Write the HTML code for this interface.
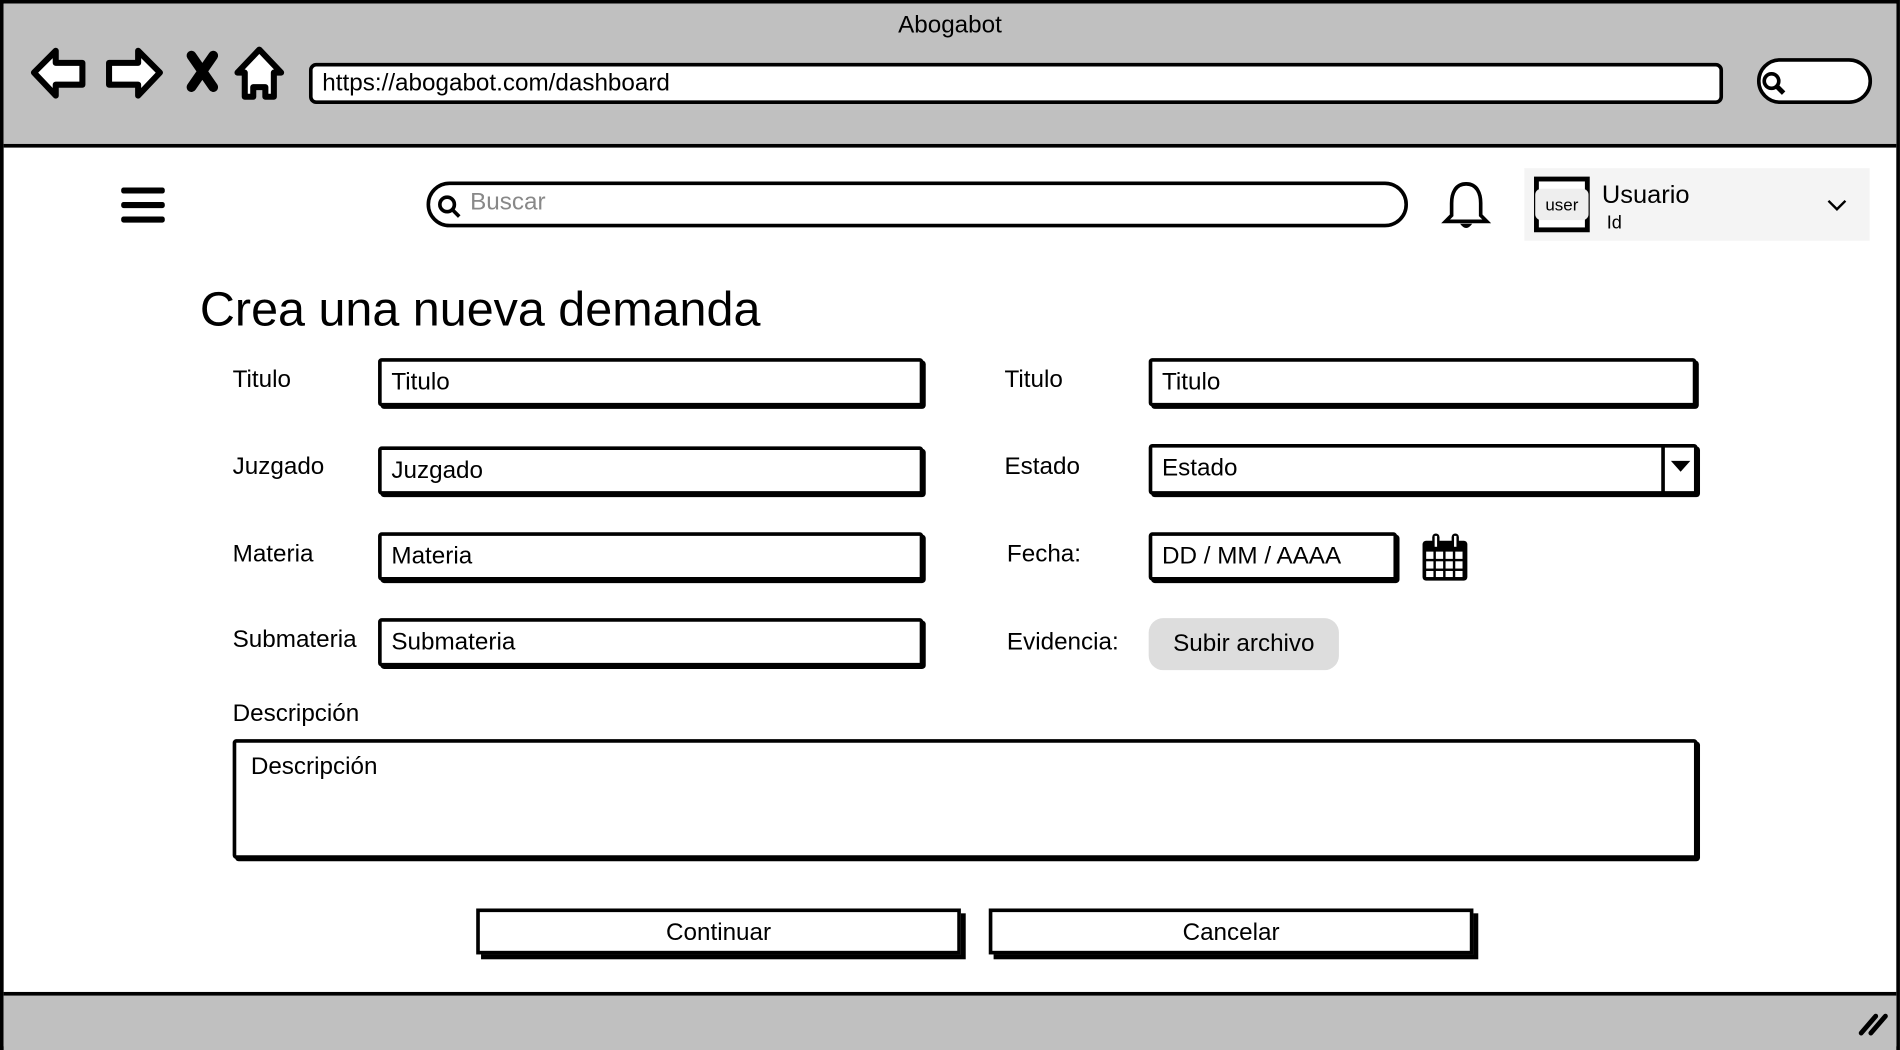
<!DOCTYPE html>
<html><head><meta charset="utf-8"><style>
html,body{margin:0;padding:0;width:1900px;height:1050px;overflow:hidden;background:#fff}
#w{position:absolute;left:0;top:0;width:1568px;height:868px;transform:scale(1.2117,1.2097);transform-origin:0 0;font-family:"Liberation Sans",sans-serif;color:#000}
.a{position:absolute}
.in{position:absolute;border:3px solid #000;border-radius:3px;background:#fff;box-sizing:border-box;font-size:20px;padding-left:8px;line-height:34px;box-shadow:2px 2px 0 #000}
.lb{position:absolute;font-size:20px}
.btn{position:absolute;border:3px solid #000;background:#fff;box-sizing:border-box;font-size:20px;text-align:center;line-height:34px;box-shadow:4px 4px 0 #000}
</style></head><body><div id="w">
<div class="a" style="left:0;top:0;width:1568px;height:868px;box-sizing:border-box;border:3px solid #000;background:#fff"></div>
<div class="a" style="left:3px;top:3px;width:1562px;height:116px;background:#c0c0c0;border-bottom:3px solid #000"></div>
<div class="a" style="left:0;top:10px;width:1568px;text-align:center;font-size:20px">Abogabot</div>
<svg class="a" style="left:22px;top:36px" width="220" height="52" viewBox="0 0 220 52">
<path d="M6 24 L24 6 L24 16 L46 16 L46 34 L24 34 L24 43 Z" fill="#fff" stroke="#000" stroke-width="5" stroke-linejoin="round"/>
<path d="M110 24 L92 6 L92 16 L68 16 L68 34 L92 34 L92 43 Z" fill="#fff" stroke="#000" stroke-width="5" stroke-linejoin="round"/>
<path d="M136 10 L154 36 M154 10 L136 36" stroke="#000" stroke-width="8" stroke-linecap="round"/>
<path d="M192 5 L210 24 L204 24 L204 44 L197 44 L197 36 L187 36 L187 44 L180 44 L180 24 L174 24 Z" fill="#fff" stroke="#000" stroke-width="5" stroke-linejoin="round"/>
</svg>
<div class="in" style="left:255px;top:52px;width:1167px;height:34px;line-height:28px;padding-left:8px;box-shadow:none;border-radius:6px">https://abogabot.com/dashboard</div>
<div class="a" style="left:1450px;top:48px;width:95px;height:38px;border:3px solid #000;border-radius:20px;background:#fff;box-sizing:border-box"></div>
<svg class="a" style="left:1453px;top:58px" width="22" height="22"><circle cx="9" cy="9" r="6" fill="none" stroke="#000" stroke-width="3"/><path d="M13 13 L19 19" stroke="#000" stroke-width="4"/></svg>
<div class="a" style="left:3px;top:820px;width:1562px;height:45px;background:#c0c0c0;border-top:3px solid #000"></div>
<svg class="a" style="left:1532px;top:834px" width="28" height="24"><path d="M4 20 L16 6 M12 20 L24 6" stroke="#000" stroke-width="4" stroke-linecap="round"/></svg>

<div class="a" style="left:100px;top:155px;width:36px;height:5px;background:#000;box-shadow:0 12px 0 #000,0 24px 0 #000;border-radius:2px"></div>
<div class="a" style="left:352px;top:150px;width:810px;height:38px;border:3px solid #000;border-radius:20px;box-sizing:border-box"></div>
<svg class="a" style="left:360px;top:160px" width="22" height="22"><circle cx="9" cy="9" r="6" fill="none" stroke="#000" stroke-width="3"/><path d="M13 13 L19 19" stroke="#000" stroke-width="3"/></svg>
<div class="a" style="left:388px;top:156px;font-size:20px;color:#888">Buscar</div>
<svg class="a" style="left:1189px;top:148px" width="42" height="44" viewBox="0 0 42 44"><path d="M21 4 C12 4 9 12 9 20 L9 30 L4 35 L38 35 L33 30 L33 20 C33 12 30 4 21 4 Z" fill="none" stroke="#000" stroke-width="3"/><path d="M16 37 Q21 44 26 37" fill="#000"/></svg>
<div class="a" style="left:1258px;top:139px;width:285px;height:60px;background:#f4f4f4"></div>
<div class="a" style="left:1266px;top:146px;width:46px;height:46px;border:4px solid #000;box-sizing:border-box;background:#fff"></div>
<div class="a" style="left:1267px;top:156px;width:44px;height:26px;background:#eee;border-radius:5px;font-size:14px;text-align:center;line-height:26px">user</div>
<div class="a" style="left:1322px;top:150px;font-size:21px">Usuario</div>
<div class="a" style="left:1326px;top:176px;font-size:15px">Id</div>
<svg class="a" style="left:1507px;top:163px" width="18" height="14"><path d="M2 3 L9 10 L16 3" fill="none" stroke="#000" stroke-width="2"/></svg>

<div class="a" style="left:165px;top:234px;font-size:40px">Crea una nueva demanda</div>

<div class="lb" style="left:192px;top:303px">Titulo</div>
<div class="in" style="left:312px;top:296px;width:450px;height:40px">Titulo</div>
<div class="lb" style="left:192px;top:375px">Juzgado</div>
<div class="in" style="left:312px;top:369px;width:450px;height:40px">Juzgado</div>
<div class="lb" style="left:192px;top:447px">Materia</div>
<div class="in" style="left:312px;top:440px;width:450px;height:40px">Materia</div>
<div class="lb" style="left:192px;top:518px">Submateria</div>
<div class="in" style="left:312px;top:511px;width:450px;height:40px">Submateria</div>

<div class="lb" style="left:829px;top:303px">Titulo</div>
<div class="in" style="left:948px;top:296px;width:452px;height:40px">Titulo</div>
<div class="lb" style="left:829px;top:375px">Estado</div>
<div class="in" style="left:948px;top:367px;width:453px;height:42px">Estado</div>
<div class="a" style="left:1371px;top:369px;width:3px;height:38px;background:#000"></div>
<svg class="a" style="left:1378px;top:380px" width="18" height="12"><path d="M1 1 L17 1 L9 10 Z" fill="#000"/></svg>
<div class="lb" style="left:831px;top:447px">Fecha:</div>
<div class="in" style="left:948px;top:440px;width:205px;height:40px">DD / MM / AAAA</div>
<svg class="a" style="left:1173px;top:440px" width="40" height="42" viewBox="0 0 40 42"><rect x="1" y="7" width="37" height="33" rx="3" fill="#000"/><rect x="9" y="1" width="6" height="13" rx="3" fill="#000"/><rect x="25" y="1" width="6" height="13" rx="3" fill="#000"/><rect x="11" y="3" width="2" height="9" fill="#fff"/><rect x="27" y="3" width="2" height="9" fill="#fff"/><g fill="#fff"><rect x="4" y="16" width="6" height="6"/><rect x="12" y="16" width="6" height="6"/><rect x="20" y="16" width="6" height="6"/><rect x="28" y="16" width="6" height="6"/><rect x="4" y="24" width="6" height="6"/><rect x="12" y="24" width="6" height="6"/><rect x="20" y="24" width="6" height="6"/><rect x="28" y="24" width="6" height="6"/><rect x="4" y="32" width="6" height="5"/><rect x="12" y="32" width="6" height="5"/><rect x="20" y="32" width="6" height="5"/><rect x="28" y="32" width="6" height="5"/></g></svg>
<div class="lb" style="left:831px;top:520px">Evidencia:</div>
<div class="a" style="left:948px;top:511px;width:157px;height:43px;background:#ddd;border-radius:12px;font-size:20px;text-align:center;line-height:42px">Subir archivo</div>

<div class="lb" style="left:192px;top:579px">Descripción</div>
<div class="in" style="left:192px;top:611px;width:1209px;height:99px;padding:6px 12px;line-height:28px">Descripción</div>

<div class="btn" style="left:393px;top:751px;width:400px;height:38px">Continuar</div>
<div class="btn" style="left:816px;top:751px;width:400px;height:38px">Cancelar</div>
</div></body></html>
